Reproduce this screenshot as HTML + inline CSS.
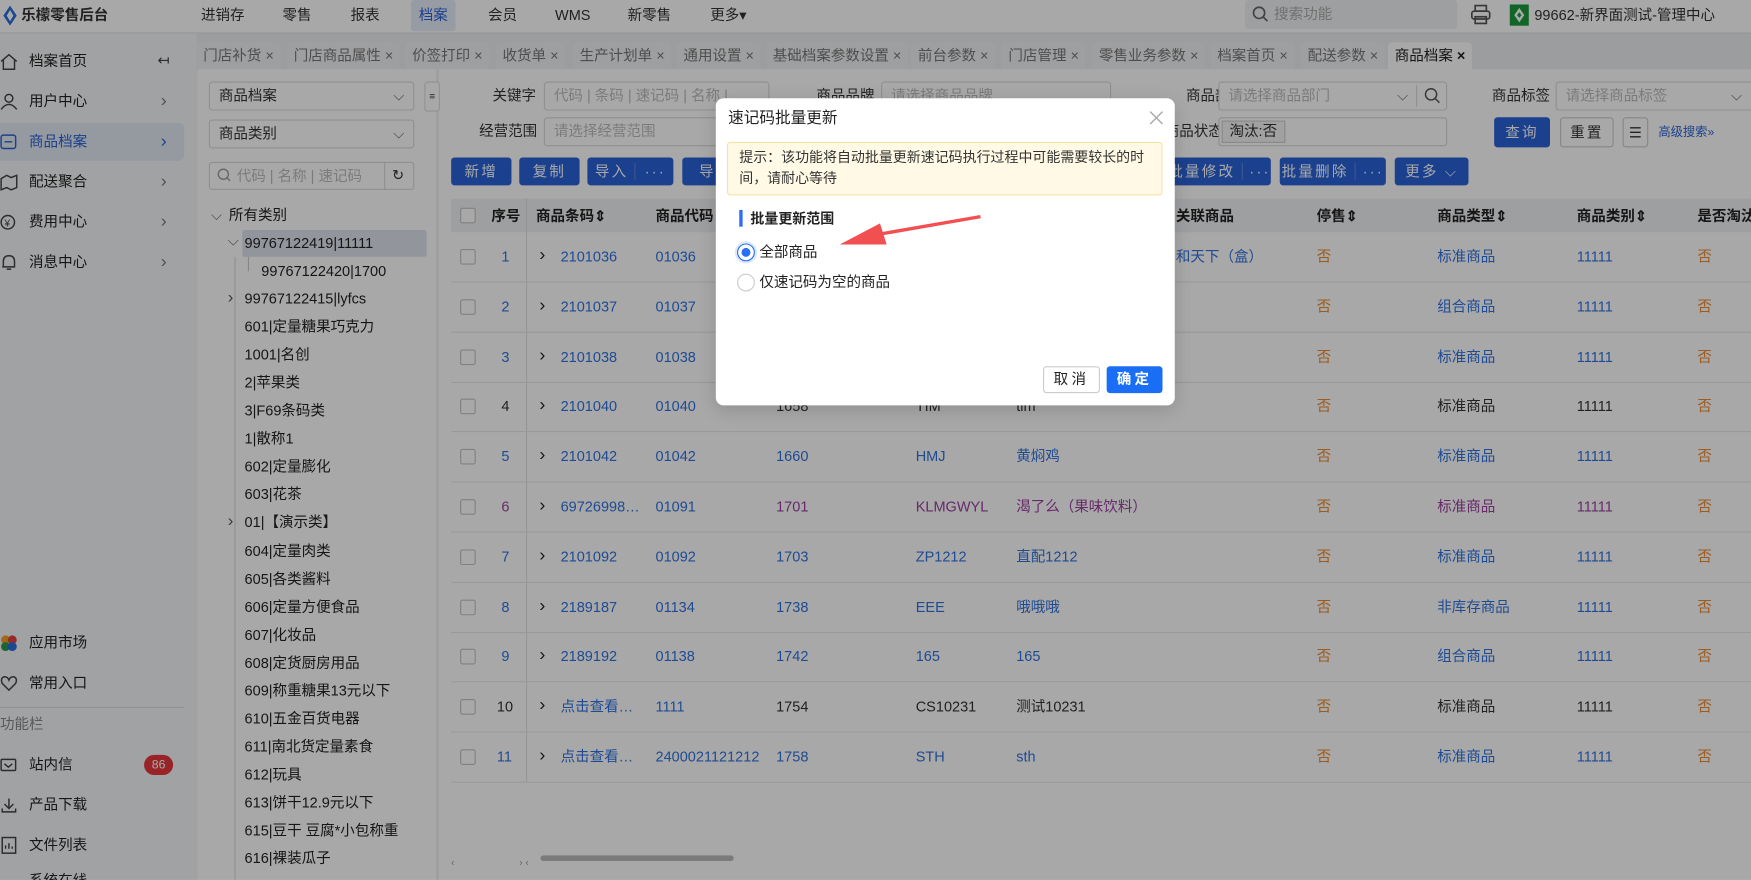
<!DOCTYPE html>
<html><head><meta charset="utf-8"><style>
*{margin:0;padding:0;box-sizing:border-box}
html,body{width:1751px;height:880px;overflow:hidden;background:#fff}
body{font-family:"Liberation Sans","Noto Sans CJK SC",sans-serif;font-size:13px;color:#333}
#w{position:absolute;left:0;top:0;width:1568px;height:788px;transform:scale(1.11671);transform-origin:0 0;background:#f3f4f6;overflow:hidden}
.a{position:absolute;white-space:nowrap;line-height:18px}
.top{left:0;top:0;width:1568px;height:30px;background:#fff;border-bottom:1px solid #e4e4e4}
.side{left:0;top:30px;width:177px;height:758px;background:#f5f6f8}
.si{left:26px;font-size:13px;color:#222}
.tab{top:38px;height:24px;background:#f0f1f3;color:#777;font-size:13px;line-height:24px;padding:0 6px;border-radius:3px 3px 0 0}
.tree{left:177px;top:62px;width:215px;height:726px;background:#fff;border-right:1px solid #e6e6e6}
.ti{left:219px;font-size:13px;color:#222}
.sel{border:1px solid #d9d9d9;border-radius:3px;background:#fff;height:26px;line-height:24px;padding-left:8px;color:#333}
.inp{border:1px solid #d9d9d9;border-radius:3px;background:#fff;height:26px;line-height:24px;padding-left:8px;color:#bbb}
.lbl{font-size:13px;color:#333}
.btn{height:25px;line-height:25px;background:#2a62d6;color:#fff;border-radius:3px;text-align:center;font-size:13px;letter-spacing:2px}
.th{top:178px;height:30px;left:404px;width:1164px;background:#f0f1f3}
.hd{top:185px;font-weight:bold;font-size:13px;color:#222}
.c{font-size:13px;color:#2f72e0}
.k{color:#333}.p{color:#9b3fa0}.o{color:#f08a30}
.rl{left:404px;width:1164px;height:1px;background:#e8e8e8}
.cb{left:412px;width:14px;height:14px;border:1px solid #c4c4c4;border-radius:2px;background:#fff}
#ov{position:absolute;left:0;top:0;width:1568px;height:788px;background:rgba(0,0,0,0.34)}
</style></head><body><div id="w">
<div class="a top"></div>
<div class="a" style="left:3px;top:5px;width:10px;height:16px;"><svg width="12" height="18" viewBox="0 0 12 18"><path d="M6 0 L12 9 L6 18 L0 9Z" fill="#2a6ee0"/><path d="M6 4 L9 9 L6 14 L3 9Z" fill="#fff"/></svg></div>
<div class="a" style="left:19px;top:5px;font-weight:bold;font-size:13px">乐檬零售后台</div>
<div class="a" style="left:368px;top:0;width:40px;height:28px;background:#e6ecf8;border-radius:3px"></div>
<div class="a" style="left:180px;top:5px;font-size:13px">进销存</div>
<div class="a" style="left:253px;top:5px">零售</div>
<div class="a" style="left:314px;top:5px">报表</div>
<div class="a" style="left:375px;top:5px;color:#2a62d6">档案</div>
<div class="a" style="left:437px;top:5px">会员</div>
<div class="a" style="left:497px;top:5px">WMS</div>
<div class="a" style="left:562px;top:5px">新零售</div>
<div class="a" style="left:636px;top:5px">更多▾</div>
<div class="a" style="left:1115px;top:0;width:190px;height:26px;background:#f0f1f3;border-radius:3px;color:#aaa;padding:4px 0 0 26px">搜索功能</div>
<svg class="a" style="left:1121px;top:5px" width="15" height="15"><circle cx="6.5" cy="6.5" r="5" fill="none" stroke="#666" stroke-width="1.5"/><path d="M10 10l4 4" stroke="#666" stroke-width="1.5"/></svg>
<svg class="a" style="left:1317px;top:4px" width="18" height="18"><rect x="4" y="1" width="10" height="5" fill="none" stroke="#555" stroke-width="1.5"/><rect x="1" y="6" width="16" height="7" rx="2" fill="none" stroke="#555" stroke-width="1.5"/><rect x="4" y="11" width="10" height="6" fill="none" stroke="#555" stroke-width="1.5"/></svg>
<div class="a" style="left:1352px;top:4px;width:17px;height:19px;background:#1a9a3a"><svg width="17" height="19"><path d="M8.5 3 L13 9.5 L8.5 16 L4 9.5Z" fill="#fff"/><path d="M8.5 7 L10.5 9.5 L8.5 12 L6.5 9.5Z" fill="#1a9a3a"/></svg></div>
<div class="a" style="left:1374px;top:5px">99662-新界面测试-管理中心</div>

<div class="a side"></div>
<div class="a" style="left:0;top:110px;width:165px;height:34px;background:#e3e8f3;border-radius:0 6px 6px 0"></div>
<svg class="a" style="left:0;top:47px" width="16" height="16"><path d="M1 8 L8 2 L15 8 M3 7 V15 H13 V7" fill="none" stroke="#444" stroke-width="1.3"/></svg>
<div class="a si" style="top:46px">档案首页</div><div class="a" style="left:141px;top:45px;color:#444">↤</div>
<svg class="a" style="left:0;top:83px" width="16" height="16"><circle cx="8" cy="5" r="3.5" fill="none" stroke="#444" stroke-width="1.3"/><path d="M1 15 Q8 6 15 15" fill="none" stroke="#444" stroke-width="1.3"/></svg>
<div class="a si" style="top:82px">用户中心</div>
<svg class="a" style="left:0;top:119px" width="16" height="16"><rect x="1" y="2" width="13" height="12" rx="2" fill="none" stroke="#2a62d6" stroke-width="1.3"/><path d="M4 8h7" stroke="#2a62d6" stroke-width="1.3"/></svg>
<div class="a si" style="top:118px;color:#2a62d6">商品档案</div>
<svg class="a" style="left:0;top:155px" width="16" height="16"><path d="M1 5 L6 2 L10 4 L15 2 V13 L10 15 L6 13 L1 15Z" fill="none" stroke="#444" stroke-width="1.3"/></svg>
<div class="a si" style="top:154px">配送聚合</div>
<svg class="a" style="left:0;top:191px" width="16" height="16"><circle cx="7" cy="8" r="6" fill="none" stroke="#444" stroke-width="1.3"/><text x="4" y="12" font-size="9" fill="#444">¥</text></svg>
<div class="a si" style="top:190px">费用中心</div>
<svg class="a" style="left:0;top:227px" width="16" height="16"><path d="M3 12 V7 Q3 2 8 2 Q13 2 13 7 V12 H2 M6 14 h4" fill="none" stroke="#444" stroke-width="1.3"/></svg>
<div class="a si" style="top:226px">消息中心</div>
<div class="a" style="left:144px;top:82px;color:#777;font-size:16px">›</div><div class="a" style="left:144px;top:118px;color:#2a62d6;font-size:16px">›</div><div class="a" style="left:144px;top:154px;color:#777;font-size:16px">›</div><div class="a" style="left:144px;top:190px;color:#777;font-size:16px">›</div><div class="a" style="left:144px;top:226px;color:#777;font-size:16px">›</div>
<svg class="a" style="left:0;top:568px" width="16" height="16"><circle cx="5" cy="5" r="4" fill="#f4a020"/><circle cx="11" cy="5" r="4" fill="#e84040"/><circle cx="5" cy="11" r="4" fill="#2a9a4a"/><circle cx="11" cy="11" r="4" fill="#2a6ee0"/></svg>
<div class="a si" style="top:567px">应用市场</div>
<svg class="a" style="left:0;top:604px" width="16" height="16"><path d="M8 14 L2 8 Q0 3 4 2 Q7 2 8 5 Q9 2 12 2 Q16 3 14 8Z" fill="none" stroke="#444" stroke-width="1.3"/></svg>
<div class="a si" style="top:603px">常用入口</div>
<div class="a" style="left:0;top:633px;width:165px;height:1px;background:#ddd"></div>
<div class="a" style="left:0;top:640px;color:#888">功能栏</div>
<svg class="a" style="left:0;top:677px" width="16" height="16"><rect x="1" y="3" width="13" height="10" rx="1" fill="none" stroke="#444" stroke-width="1.3"/><path d="M4 7 L7.5 10 L11 7" fill="none" stroke="#444" stroke-width="1.3"/></svg>
<div class="a si" style="top:676px">站内信</div>
<div class="a" style="left:129px;top:676px;width:26px;height:18px;background:#e8383d;border-radius:9px;color:#fff;font-size:11px;text-align:center;line-height:18px">86</div>
<svg class="a" style="left:0;top:713px" width="16" height="16"><path d="M8 2 V10 M4 7 L8 11 L12 7 M2 11 V14 H14 V11" fill="none" stroke="#444" stroke-width="1.3"/></svg>
<div class="a si" style="top:712px">产品下载</div>
<svg class="a" style="left:0;top:749px" width="16" height="16"><rect x="2" y="1" width="12" height="14" fill="none" stroke="#444" stroke-width="1.3"/><path d="M5 11V8 M8 11V6 M11 11V9" stroke="#444" stroke-width="1.3"/></svg>
<div class="a si" style="top:748px">文件列表</div>
<div class="a si" style="top:780px">系统在线</div>

<div class="a" style="left:176px;top:30px;width:1392px;height:32px;background:#eceef1"></div>
<div class="a tab" style="left:176px;line-height:24px">门店补货 ×</div>
<div class="a tab" style="left:257px;line-height:24px">门店商品属性 ×</div>
<div class="a tab" style="left:363px;line-height:24px">价签打印 ×</div>
<div class="a tab" style="left:444px;line-height:24px">收货单 ×</div>
<div class="a tab" style="left:513px;line-height:24px">生产计划单 ×</div>
<div class="a tab" style="left:606px;line-height:24px">通用设置 ×</div>
<div class="a tab" style="left:686px;line-height:24px">基础档案参数设置 ×</div>
<div class="a tab" style="left:816px;line-height:24px">前台参数 ×</div>
<div class="a tab" style="left:897px;line-height:24px">门店管理 ×</div>
<div class="a tab" style="left:978px;line-height:24px">零售业务参数 ×</div>
<div class="a tab" style="left:1084px;line-height:24px">档案首页 ×</div>
<div class="a tab" style="left:1165px;line-height:24px">配送参数 ×</div>
<div class="a tab" style="left:1243px;background:#fff;color:#222;line-height:24px">商品档案 <b>×</b></div>

<div class="a tree"></div>
<div class="a sel" style="left:187px;top:73px;width:184px;line-height:24px">商品档案<span style="position:absolute;right:8px;color:#666">⌵</span></div>
<div class="a sel" style="left:187px;top:107px;width:184px;line-height:24px">商品类别<span style="position:absolute;right:8px;color:#666">⌵</span></div>
<div class="a inp" style="left:187px;top:145px;width:184px;height:25px;line-height:23px;padding-left:24px">代码 | 名称 | 速记码</div>
<svg class="a" style="left:194px;top:150px" width="14" height="14"><circle cx="6" cy="6" r="4.5" fill="none" stroke="#999" stroke-width="1.2"/><path d="M9 9l3 3" stroke="#999" stroke-width="1.2"/></svg>
<div class="a" style="left:344px;top:145px;width:1px;height:25px;background:#d9d9d9"></div>
<div class="a" style="left:351px;top:148px;color:#333">↻</div>
<div class="a" style="left:189px;top:184px;color:#666">⌵</div><div class="a ti" style="left:205px;top:184px">所有类别</div>
<div class="a" style="left:217px;top:206px;width:165px;height:24px;background:#dfe3ee;border-radius:2px"></div>
<div class="a" style="left:204px;top:207px;color:#666">⌵</div><div class="a ti" style="top:209px">99767122419|11111</div>
<div class="a" style="left:210px;top:230px;width:1px;height:558px;background:#ddd"></div>
<div class="a" style="left:222px;top:230px;width:1px;height:13px;background:#ccc"></div>
<div class="a ti" style="left:234px;top:234px">99767122420|1700</div>
<div class="a" style="left:204px;top:258px;color:#555;font-size:15px">›</div><div class="a ti" style="top:259px">99767122415|lyfcs</div>
<div class="a ti" style="top:284px">601|定量糖果巧克力</div>
<div class="a ti" style="top:309px">1001|名创</div>
<div class="a ti" style="top:334px">2|苹果类</div>
<div class="a ti" style="top:359px">3|F69条码类</div>
<div class="a ti" style="top:384px">1|散称1</div>
<div class="a ti" style="top:409px">602|定量膨化</div>
<div class="a ti" style="top:434px">603|花茶</div>
<div class="a" style="left:204px;top:458px;color:#555;font-size:15px">›</div><div class="a ti" style="top:459px">01|【演示类】</div>
<div class="a ti" style="top:485px">604|定量肉类</div>
<div class="a ti" style="top:510px">605|各类酱料</div>
<div class="a ti" style="top:535px">606|定量方便食品</div>
<div class="a ti" style="top:560px">607|化妆品</div>
<div class="a ti" style="top:585px">608|定货厨房用品</div>
<div class="a ti" style="top:610px">609|称重糖果13元以下</div>
<div class="a ti" style="top:635px">610|五金百货电器</div>
<div class="a ti" style="top:660px">611|南北货定量素食</div>
<div class="a ti" style="top:685px">612|玩具</div>
<div class="a ti" style="top:710px">613|饼干12.9元以下</div>
<div class="a ti" style="top:735px">615|豆干 豆腐*小包称重</div>
<div class="a ti" style="top:760px">616|裸装瓜子</div>

<div class="a" style="left:393px;top:62px;width:1175px;height:726px;background:#fff"></div>
<div class="a" style="left:380px;top:73px;width:14px;height:27px;border:1px solid #ddd;border-radius:3px;background:#fff;font-size:9px;line-height:25px;text-align:center">≡</div>
<div class="a lbl" style="left:441px;top:77px">关键字</div>
<div class="a inp" style="left:487px;top:73px;width:202px;line-height:24px">代码 | 条码 | 速记码 | 名称 |</div>
<div class="a lbl" style="left:731px;top:77px">商品品牌</div>
<div class="a inp" style="left:789px;top:73px;width:206px;line-height:24px">请选择商品品牌</div>
<div class="a lbl" style="left:1062px;top:77px">商品部门</div>
<div class="a inp" style="left:1091px;top:73px;width:205px;line-height:24px">请选择商品部门<span style="position:absolute;right:34px;color:#666">⌵</span></div>
<div class="a" style="left:1268px;top:76px;width:1px;height:20px;background:#ddd"></div>
<svg class="a" style="left:1275px;top:78px" width="15" height="15"><circle cx="6.5" cy="6.5" r="5" fill="none" stroke="#555" stroke-width="1.3"/><path d="M10 10l4 4" stroke="#555" stroke-width="1.3"/></svg>
<div class="a lbl" style="left:1336px;top:77px">商品标签</div>
<div class="a inp" style="left:1393px;top:73px;width:180px;line-height:24px">请选择商品标签<span style="position:absolute;right:12px;color:#666">⌵</span></div>
<div class="a lbl" style="left:429px;top:109px">经营范围</div>
<div class="a inp" style="left:487px;top:105px;width:300px;line-height:24px">请选择经营范围</div>
<div class="a lbl" style="left:1043px;top:109px">商品状态</div>
<div class="a inp" style="left:1091px;top:105px;width:205px;padding-left:2px;line-height:24px"><span style="display:inline-block;border:1px solid #d0d0d0;background:#f4f4f4;color:#333;height:20px;line-height:18px;padding:0 6px;margin-top:2px">淘汰:否</span></div>
<div class="a btn" style="left:1338px;top:105px;width:50px;height:27px;line-height:27px">查询</div>
<div class="a" style="left:1397px;top:105px;width:48px;height:27px;border:1px solid #ccc;border-radius:3px;text-align:center;line-height:25px;letter-spacing:2px">重置</div>
<div class="a" style="left:1453px;top:105px;width:23px;height:27px;border:1px solid #ccc;border-radius:3px;text-align:center;line-height:25px">☰</div>
<div class="a" style="left:1485px;top:110px;font-size:11px;color:#2a62d6">高级搜索»</div>
<div class="a btn" style="left:404px;top:141px;width:54px;line-height:25px">新增</div>
<div class="a btn" style="left:465px;top:141px;width:54px;line-height:25px">复制</div>
<div class="a btn" style="left:526px;top:141px;width:77px;line-height:25px">导入 <span style="border-left:1px solid #5a85e0;padding-left:8px">···</span></div>
<div class="a btn" style="left:611px;top:141px;width:60px;line-height:25px">导出</div>
<div class="a btn" style="left:1046px;top:141px;width:92px;line-height:25px">批量修改 <span style="border-left:1px solid #5a85e0;padding-left:6px">···</span></div>
<div class="a btn" style="left:1146px;top:141px;width:95px;line-height:25px">批量删除 <span style="border-left:1px solid #5a85e0;padding-left:6px">···</span></div>
<div class="a btn" style="left:1249px;top:141px;width:66px;line-height:25px">更多 ⌵</div>

<div class="a th"></div>
<div class="a" style="left:471px;top:178px;width:1px;height:522px;background:#e3e3e3"></div>
<div class="a cb" style="top:186px"></div>
<div class="a hd" style="left:440px">序号</div>
<div class="a hd" style="left:480px">商品条码⇕</div>
<div class="a hd" style="left:587px">商品代码</div>
<div class="a hd" style="left:1053px">关联商品</div>
<div class="a hd" style="left:1179px">停售⇕</div>
<div class="a hd" style="left:1287px">商品类型⇕</div>
<div class="a hd" style="left:1412px">商品类别⇕</div>
<div class="a hd" style="left:1520px">是否淘汰</div>

<div id="rows"></div>
<div class="a" style="left:404px;top:763px;font-size:9px;color:#999">‹</div><div class="a" style="left:465px;top:763px;font-size:9px;color:#999">› ‹</div>
<div class="a" style="left:484px;top:766px;width:173px;height:5px;background:#bbb;border-radius:3px"></div>

<script>
var R=[
["1","2101036","01036","","","","和天下（盒）","标准商品","c"],
["2","2101037","01037","","","","","组合商品","c"],
["3","2101038","01038","","","","","标准商品","c"],
["4","2101040","01040","1658","TIM","tim","","标准商品","k"],
["5","2101042","01042","1660","HMJ","黄焖鸡","","标准商品","c"],
["6","69726998…","01091","1701","KLMGWYL","渴了么（果味饮料）","","标准商品","p"],
["7","2101092","01092","1703","ZP1212","直配1212","","标准商品","c"],
["8","2189187","01134","1738","EEE","哦哦哦","","非库存商品","c"],
["9","2189192","01138","1742","165","165","","组合商品","c"],
["10","点击查看…","1111","1754","CS10231","测试10231","","标准商品","k"],
["11","点击查看…","2400021121212","1758","STH","sth","","标准商品","c"]];
var h="";
R.forEach(function(r,i){var y=221+i*44.8;var t=r[8];
h+='<div class="a rl" style="top:'+(y+31)+'px"></div>';
h+='<div class="a cb" style="top:'+(y+2)+'px"></div>';
h+='<div class="a c '+t+'" style="left:'+(r[0].length>1?445:449)+'px;top:'+y+'px">'+r[0]+'</div>';
h+='<div class="a" style="left:483px;top:'+(y-1)+'px;color:#222;font-size:16px">›</div>';
h+='<div class="a c" style="left:502px;top:'+y+'px">'+r[1]+'</div>';
h+='<div class="a c" style="left:587px;top:'+y+'px">'+r[2]+'</div>';
h+='<div class="a c '+t+'" style="left:695px;top:'+y+'px">'+r[3]+'</div>';
h+='<div class="a c '+t+'" style="left:820px;top:'+y+'px">'+r[4]+'</div>';
h+='<div class="a c '+t+'" style="left:910px;top:'+y+'px">'+r[5]+'</div>';
h+='<div class="a c" style="left:1053px;top:'+y+'px">'+r[6]+'</div>';
h+='<div class="a c o" style="left:1179px;top:'+y+'px">否</div>';
h+='<div class="a c '+t+'" style="left:1287px;top:'+y+'px">'+r[7]+'</div>';
h+='<div class="a c '+t+'" style="left:1412px;top:'+y+'px">11111</div>';
h+='<div class="a c o" style="left:1520px;top:'+y+'px">否</div>';});
document.getElementById("rows").innerHTML=h;
</script>

<div id="ov"></div>
<div class="a" style="left:641px;top:88px;width:411px;height:275px;background:#fff;border-radius:7px;box-shadow:0 4px 16px rgba(0,0,0,.15)"></div>
<div class="a" style="left:652px;top:96px;font-size:14px;color:#222">速记码批量更新</div>
<svg class="a" style="left:1029px;top:99px" width="13" height="13"><path d="M1 1L12 12M12 1L1 12" stroke="#aaa" stroke-width="1.3"/></svg>
<div class="a" style="left:651px;top:127px;width:390px;height:48px;background:#fff9e6;border:1px solid #f7e2a2;border-radius:3px"></div>
<div class="a" style="left:662px;top:132px;font-size:12.5px;line-height:19px;color:#333;white-space:normal;width:372px">提示：该功能将自动批量更新速记码执行过程中可能需要较长的时间，请耐心等待</div>
<div class="a" style="left:662px;top:188px;width:3px;height:15px;background:#2a6ef5"></div>
<div class="a" style="left:672px;top:187px;font-weight:bold;font-size:12.5px;color:#222">批量更新范围</div>
<div class="a" style="left:660px;top:218px;width:16px;height:16px;border-radius:50%;border:1px solid #2a6ef5;box-shadow:0 0 0 2px #dde8fd"></div>
<div class="a" style="left:664px;top:222px;width:8px;height:8px;border-radius:50%;background:#2a6ef5"></div>
<div class="a" style="left:680px;top:217px;color:#222">全部商品</div>
<div class="a" style="left:660px;top:245px;width:16px;height:16px;border-radius:50%;border:1px solid #ccc"></div>
<div class="a" style="left:680px;top:244px;color:#222">仅速记码为空的商品</div>
<div class="a" style="left:934px;top:328px;width:51px;height:24px;border:1px solid #ccc;border-radius:3px;text-align:center;line-height:22px;letter-spacing:3px;color:#222">取消</div>
<div class="a" style="left:991px;top:328px;width:50px;height:24px;background:#1a6ef5;border-radius:3px;text-align:center;line-height:24px;letter-spacing:3px;color:#fff;font-weight:bold">确定</div>
<svg class="a" style="left:740px;top:185px" width="145" height="45"><path d="M138 9 L40 26" stroke="#f25050" stroke-width="3"/><path d="M12 34 L48 15 L54 34Z" fill="#f25050"/></svg>
</div></body></html>
